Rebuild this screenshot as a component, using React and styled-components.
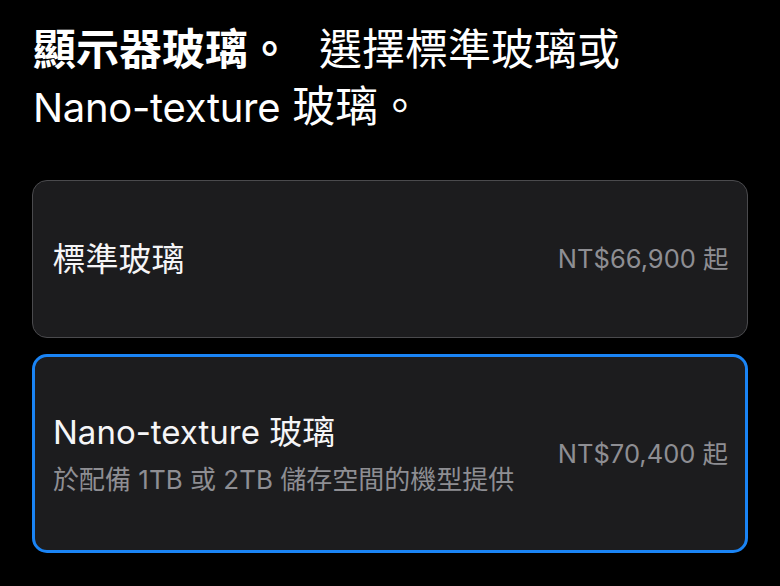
import React from 'react';
import styled, { createGlobalStyle } from 'styled-components';

const GlobalStyle = createGlobalStyle`
  html, body {
    margin: 0;
    padding: 0;
    background: #000;
  }
  body {
    font-family: "Inter", "Noto Sans CJK TC", sans-serif;
    -webkit-font-smoothing: antialiased;
  }
`;

const Page = styled.div`
  width: 780px;
  height: 586px;
  box-sizing: border-box;
  padding: 21px 32px 0 32px;
  background: #000;
  color: #fff;
`;

const Heading = styled.h1`
  margin: 0 0 44px 1px;
  font-size: 43px;
  line-height: 57px;
  font-weight: 400;

  strong {
    font-weight: 700;
    margin-right: 28px;
  }
`;

const Latin = styled.span`
  font-size: 40px;
  letter-spacing: -0.3px;
`;

const Options = styled.div`
  display: flex;
  flex-direction: column;
  gap: 16px;
`;

const Option = styled.div`
  box-sizing: border-box;
  height: ${p => p.$tall ? '199px' : '158px'};
  display: flex;
  align-items: center;
  justify-content: space-between;
  background: #1c1c1e;
  border: ${p => p.$selected ? '3px solid #1a84f5' : '1.5px solid #4a4a4d'};
  border-radius: 15px;
  padding-left: ${p => p.$selected ? '18px' : '19.5px'};
  padding-right: ${p => p.$selected ? '17px' : '18.5px'};
`;

const Info = styled.div`
  display: flex;
  flex-direction: column;
  gap: 12px;
`;

const Title = styled.div`
  font-size: 33px;
  line-height: 40px;
  color: #f5f5f7;
`;

const Note = styled.div`
  font-size: 26px;
  line-height: 32px;
  color: #8e8e93;
`;

const Price = styled.div`
  font-size: 25.5px;
  line-height: 32px;
  color: #8e8e93;
  white-space: nowrap;
`;

export default function App() {
  return (
    <Page>
      <GlobalStyle />
      <Heading>
        <strong>顯示器玻璃。</strong>選擇標準玻璃或<br />
        <Latin>Nano-texture</Latin> 玻璃。
      </Heading>
      <Options>
        <Option>
          <Info>
            <Title>標準玻璃</Title>
          </Info>
          <Price>NT$66,900 起</Price>
        </Option>
        <Option $tall $selected>
          <Info>
            <Title>Nano-texture 玻璃</Title>
            <Note>於配備 1TB 或 2TB 儲存空間的機型提供</Note>
          </Info>
          <Price>NT$70,400 起</Price>
        </Option>
      </Options>
    </Page>
  );
}
